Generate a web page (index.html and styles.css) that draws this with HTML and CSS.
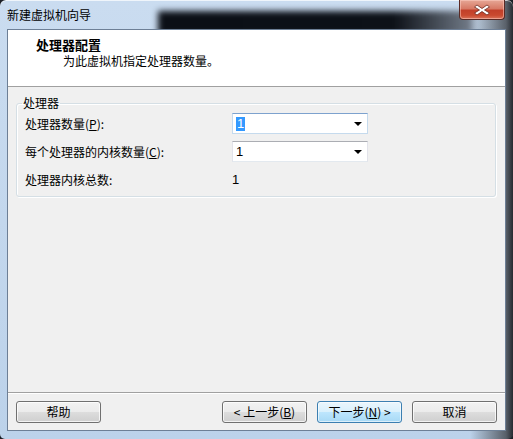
FILE: index.html
```html
<!DOCTYPE html>
<html lang="zh-CN">
<head>
    <meta charset="UTF-8">
    <meta name="viewport" content="width=device-width, initial-scale=1.0">
    <link rel="stylesheet" href="styles.css">
    <title>新建虚拟机向导</title>
</head>
<body>
    <div class="window">
        <div class="titlebar">
            <div class="caption">新建虚拟机向导</div>
            <div class="close-btn">
                <svg width="18" height="12" viewBox="0 0 18 12">
                    <path d="M4 1 L9 4.5 L14 1 L16.5 3 L11.5 6 L16.5 9 L14 11 L9 7.5 L4 11 L1.5 9 L6.5 6 L1.5 3 Z" fill="#fff" stroke="#6b2a20" stroke-width="0.8"/>
                </svg>
            </div>
        </div>

        <div class="client">
            <div class="wizard-header">
                <div class="wizard-title">处理器配置</div>
                <div class="wizard-sub">为此虚拟机指定处理器数量。</div>
            </div>

            <div class="wizard-body">
                <fieldset class="group">
                    <legend>处理器</legend>
                    <div class="row">
                        <div class="label">处理器数量(<u>P</u>):</div>
                        <div class="combo focused">
                            <span class="value"><span class="selected">1</span></span>
                            <span class="arrow"></span>
                        </div>
                    </div>
                    <div class="row">
                        <div class="label">每个处理器的内核数量(<u>C</u>):</div>
                        <div class="combo">
                            <span class="value">1</span>
                            <span class="arrow"></span>
                        </div>
                    </div>
                    <div class="row">
                        <div class="label">处理器内核总数:</div>
                        <div class="static">1</div>
                    </div>
                </fieldset>
            </div>

            <div class="footer">
                <button class="btn">帮助</button>
                <div class="spacer"></div>
                <button class="btn">&lt; 上一步(<u>B</u>)</button>
                <button class="btn default">下一步(<u>N</u>) &gt;</button>
                <button class="btn">取消</button>
            </div>
        </div>
    </div>
</body>
</html>
```

FILE: styles.css
```css
body {
    margin: 0;
    padding: 0;
    width: 513px;
    height: 439px;
    overflow: hidden;
    background-color: #1b1f26;
    font-family: "Noto Sans CJK SC", "Noto Sans", sans-serif;
    font-size: 12px;
    color: #000;
}

.window {
    height: 439px;
    display: flex;
    flex-direction: column;
    border-radius: 6px 6px 5px 5px;
    background:
        linear-gradient(to right, rgba(45, 49, 56, 0) 0, rgba(45, 49, 56, 0) 470px, rgba(70, 75, 82, 0.85) 506px, rgba(30, 33, 38, 0.95) 513px),
        linear-gradient(#cadcf0, #bcd2ea);
    box-shadow: inset 0 1px 0 rgba(255, 255, 255, 0.7);
}

.titlebar {
    height: 29px;
    display: flex;
    align-items: flex-start;
    position: relative;
    overflow: hidden;
    border-radius: 6px 6px 0 0;
}

/* dark desktop showing through the glass */
.titlebar::before {
    content: "";
    position: absolute;
    left: 158px;
    right: 40px;
    top: 11px;
    height: 24px;
    background: linear-gradient(to right, #0b0f16 0, #0d1118 75%, rgba(60, 64, 72, 0.6) 100%);
    filter: blur(3px);
}

.caption {
    position: relative;
    padding: 6px 0 0 7px;
    line-height: 17px;
    font-size: 12px;
    color: #000;
}

.close-btn {
    position: relative;
    margin-left: auto;
    margin-right: 8px;
    width: 44px;
    height: 19px;
    border: 1px solid #5a2a25;
    border-top: none;
    border-radius: 0 0 4px 4px;
    background: linear-gradient(#e6a796 0, #d77a66 45%, #c2402a 55%, #c9492f 80%, #d9735a 100%);
    box-shadow: inset 0 0 0 1px rgba(255, 210, 200, 0.5);
    display: flex;
    align-items: center;
    justify-content: center;
}

.client {
    flex: 1;
    margin: 0 7px 8px 7px;
    border: 1px solid #6d7f96;
    background-color: #f0f0f0;
    display: flex;
    flex-direction: column;
}

.wizard-header {
    background-color: #fff;
    border-bottom: 1px solid #a0a0a0;
    padding: 7px 0 0 28px;
    box-sizing: border-box;
    height: 57px;
}

.wizard-title {
    font-weight: bold;
    font-size: 13px;
    line-height: 16px;
}

.wizard-sub {
    padding-left: 27px;
    line-height: 16px;
}

.wizard-body {
    flex: 1;
}

.group {
    margin: 8px 9px 0 8px;
    padding: 0 8px 6px 6px;
    border: 1px solid #d5dfe5;
    border-radius: 3px;
    box-shadow: inset 1px 1px 0 #fff, 1px 1px 0 #fff;
}

.group legend {
    padding: 0 1px;
    line-height: 16px;
    margin-left: -1px;
}

.row {
    display: flex;
    align-items: center;
    height: 21px;
    margin-top: 7px;
    padding-left: 2px;
}

.row:first-of-type {
    margin-top: 2px;
}

.label {
    width: 207px;
    line-height: 21px;
}

.combo {
    width: 126px;
    height: 19px;
    border: 1px solid;
    border-color: #abadb3 #e2e3ea #e3e9ef #e2e3ea;
    background-color: #fff;
    display: flex;
    align-items: center;
    justify-content: space-between;
    padding: 0 5px 0 3px;
}

.combo.focused {
    border-color: #7da2ce #c5daed #c5daed #c5daed;
}

.value {
    font-family: "Liberation Sans", Arial, sans-serif;
    font-size: 13px;
    line-height: 15px;
}

.selected {
    background-color: #3399ff;
    color: #fff;
    padding: 0 1px;
    display: inline-block;
    line-height: 14px;
}

.arrow {
    width: 0;
    height: 0;
    border-left: 4px solid transparent;
    border-right: 4px solid transparent;
    border-top: 4px solid #000;
    margin-top: 1px;
}

.static {
    font-family: "Liberation Sans", Arial, sans-serif;
    font-size: 13px;
}

.footer {
    border-top: 1px solid #a0a0a0;
    box-shadow: inset 0 1px 0 #fff;
    display: flex;
    gap: 10px;
    padding: 8px 8px 7px 8px;
}

.spacer {
    flex: 1;
}

.btn {
    width: 85px;
    height: 22px;
    padding: 0;
    font-family: "Noto Sans CJK SC", "Noto Sans", sans-serif;
    font-size: 12px;
    color: #000;
    border: 1px solid #707070;
    border-radius: 3px;
    background: linear-gradient(#f2f2f2 0, #ebebeb 50%, #dddddd 50%, #cfcfcf 100%);
    box-shadow: inset 0 0 0 1px rgba(255, 255, 255, 0.75);
    line-height: 20px;
}

.btn.default {
    border-color: #3c7fb1;
    background: linear-gradient(#eaf6fd 0, #d9f0fc 50%, #bee6fd 50%, #a7d9f5 100%);
    box-shadow: inset 0 0 0 1px rgba(255, 255, 255, 0.6);
}
```
